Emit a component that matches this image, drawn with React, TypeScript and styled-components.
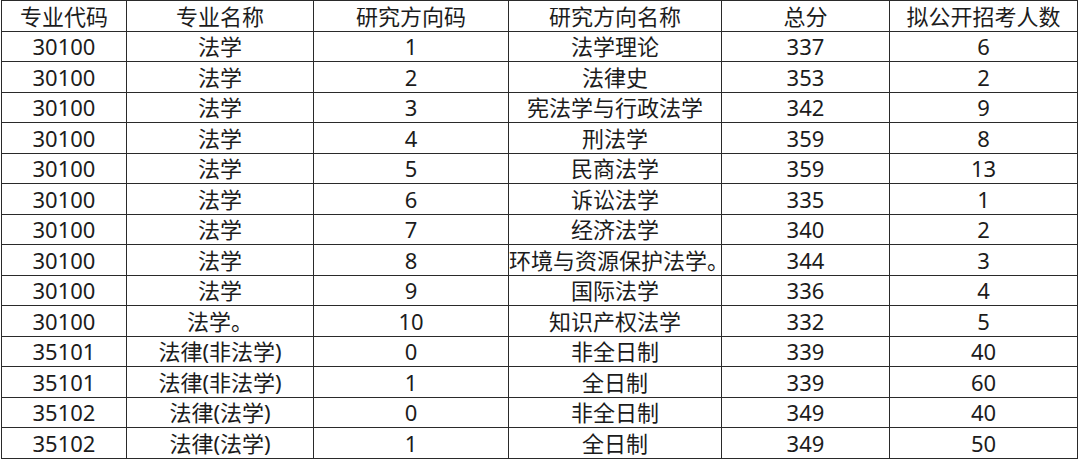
import styled, { createGlobalStyle } from 'styled-components';

const GlobalStyle = createGlobalStyle`
  html, body {
    margin: 0;
    padding: 0;
    background: #ffffff;
  }
  body {
    font-family: 'Noto Sans', 'Noto Sans CJK SC', sans-serif;
  }
`;

const COLUMNS = [125, 187, 195, 213, 168, 188];

const HEADERS = ['专业代码', '专业名称', '研究方向码', '研究方向名称', '总分', '拟公开招考人数'];

const ROWS: string[][] = [
  ['30100', '法学', '1', '法学理论', '337', '6'],
  ['30100', '法学', '2', '法律史', '353', '2'],
  ['30100', '法学', '3', '宪法学与行政法学', '342', '9'],
  ['30100', '法学', '4', '刑法学', '359', '8'],
  ['30100', '法学', '5', '民商法学', '359', '13'],
  ['30100', '法学', '6', '诉讼法学', '335', '1'],
  ['30100', '法学', '7', '经济法学', '340', '2'],
  ['30100', '法学', '8', '环境与资源保护法学。', '344', '3'],
  ['30100', '法学', '9', '国际法学', '336', '4'],
  ['30100', '法学。', '10', '知识产权法学', '332', '5'],
  ['35101', '法律(非法学)', '0', '非全日制', '339', '40'],
  ['35101', '法律(非法学)', '1', '全日制', '339', '60'],
  ['35102', '法律(法学)', '0', '非全日制', '349', '40'],
  ['35102', '法律(法学)', '1', '全日制', '349', '50'],
];

export default function App() {
  return (
    <>
      <GlobalStyle />
      <Page>
        <Table>
          <colgroup>
            {COLUMNS.map((w, i) => (
              <col key={i} style={{ width: w }} />
            ))}
          </colgroup>
          <tbody>
            <Row>
              {HEADERS.map((h) => (
                <Cell key={h}>{h}</Cell>
              ))}
            </Row>
            {ROWS.map((row, r) => (
              <Row key={r}>
                {row.map((v, c) => (
                  <Cell key={c}>{v}</Cell>
                ))}
              </Row>
            ))}
          </tbody>
        </Table>
      </Page>
    </>
  );
}

const Page = styled.div`
  width: 1080px;
  height: 459px;
  padding-left: 1px;
  box-sizing: border-box;
  overflow: hidden;
`;

const Table = styled.table`
  table-layout: fixed;
  border-collapse: collapse;
  width: 1077px;
  color: #1c1c1c;
  font-size: 22px;
`;

const Row = styled.tr`
  height: 30.5px;
`;

const Cell = styled.td`
  border: 1px solid #2a2a2a;
  padding: 0;
  text-align: center;
  vertical-align: middle;
  white-space: nowrap;
  line-height: 28px;
  overflow: visible;
`;
